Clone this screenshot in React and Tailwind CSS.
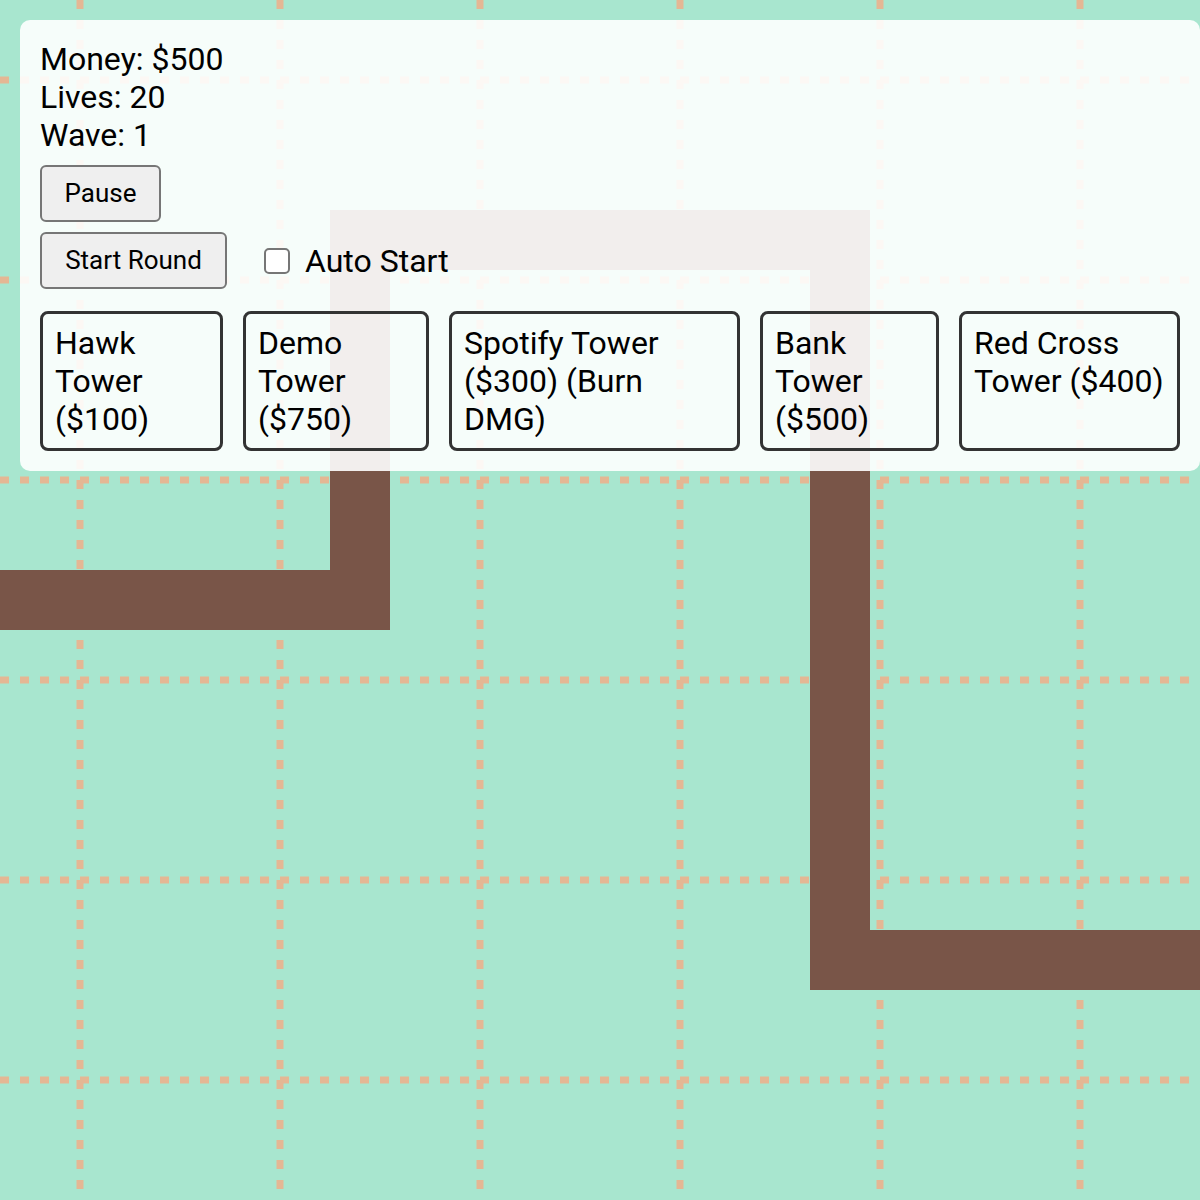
import React, { useState } from 'react';

const GRID = [80, 280, 480, 680, 880, 1080];

const TOWERS = [
  { name: 'Hawk Tower ($100)', width: 'w-[183px]' },
  { name: 'Demo Tower ($750)', width: 'w-[186px]' },
  { name: 'Spotify Tower ($300) (Burn DMG)', width: 'w-[291px]' },
  { name: 'Bank Tower ($500)', width: 'w-[179px]' },
  { name: 'Red Cross Tower ($400)', width: 'w-[221px]' },
];

// Board: dashed grid plus the enemy road on top
function Board() {
  return (
    <svg width="1200" height="1200" viewBox="0 0 1200 1200" className="block">
      <rect width="1200" height="1200" fill="#a8e6cf" />
      {GRID.map((p) => (
        <g key={p} stroke="#e4b794" strokeWidth="7" strokeDasharray="9 11">
          <line x1="0" y1={p} x2="1200" y2={p} />
          <line x1={p} y1="0" x2={p} y2="1200" />
        </g>
      ))}
      <polyline
        points="-40,600 360,600 360,240 840,240 840,960 1240,960"
        fill="none"
        stroke="#795548"
        strokeWidth="60"
        strokeLinejoin="miter"
      />
    </svg>
  );
}

export default function App() {
  const [paused, setPaused] = useState(false);
  const [autoStart, setAutoStart] = useState(false);

  return (
    <div
      className="relative w-[1200px] h-[1200px] overflow-hidden text-black"
      style={{ fontFamily: 'Roboto, "Liberation Sans", sans-serif' }}
    >
      <Board />

      {/* HUD overlay */}
      <div className="absolute left-5 top-5 w-[1180px] bg-white/90 rounded-[10px] p-5">
        <div className="text-[32px] leading-[38px]">
          <div>Money: $500</div>
          <div>Lives: 20</div>
          <div>Wave: 1</div>
        </div>

        <button
          onClick={() => setPaused(!paused)}
          className="mt-[11px] h-[57px] w-[121px] bg-[#efefef] border-2 border-[#767676] rounded-md text-[26px] block"
        >
          {paused ? 'Resume' : 'Pause'}
        </button>

        <div className="mt-[10px] flex items-center">
          <button className="h-[57px] w-[187px] bg-[#efefef] border-2 border-[#767676] rounded-md text-[26px]">
            Start Round
          </button>
          <label className="ml-[37px] flex items-center gap-[15px] text-[32px]">
            <span
              onClick={() => setAutoStart(!autoStart)}
              className="w-[26px] h-[26px] bg-white border-2 border-[#767676] rounded-[5px] flex items-center justify-center"
            >
              {autoStart && <span className="w-3 h-3 bg-[#767676] rounded-sm" />}
            </span>
            Auto Start
          </label>
        </div>

        <div className="mt-[22px] flex gap-5">
          {TOWERS.map((t) => (
            <button
              key={t.name}
              className={`${t.width} h-[140px] shrink-0 border-[3px] border-[#333333] rounded-lg pt-[10px] pl-3 pr-2 text-left flex items-start text-[32px] leading-[38px]`}
            >
              {t.name}
            </button>
          ))}
        </div>
      </div>
    </div>
  );
}
